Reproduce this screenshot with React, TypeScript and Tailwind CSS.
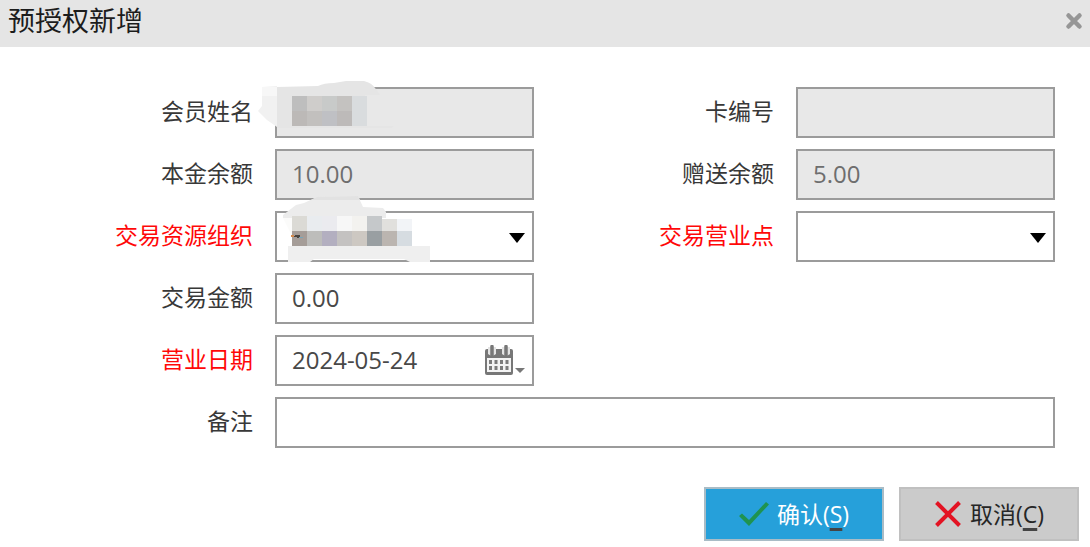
import { useState } from 'react';
import type { ReactNode } from 'react';

const fieldClass =
  'block w-full h-[51px] border-2 border-[#9b9b9b] px-[15px] pb-[3px] text-2xl outline-none rounded-none appearance-none';

interface LabelProps {
  htmlFor: string;
  required?: boolean;
  children: ReactNode;
}

function Label({ htmlFor, required, children }: LabelProps) {
  return (
    <label
      htmlFor={htmlFor}
      className={`pr-[22px] pb-[3px] text-right text-[23px] leading-8 whitespace-nowrap ${required ? 'text-[#ff0808]' : 'text-[#383838]'}`}
    >
      {children}
    </label>
  );
}

function Arrow() {
  return (
    <svg viewBox="0 0 16 10" className="absolute right-[9px] top-[22px] h-[10px] w-4 pointer-events-none" aria-hidden="true">
      <path d="M0 0h16L8 10z" fill="#000" />
    </svg>
  );
}

// Masked member name
function NameMask() {
  const cells = [
    ['#bebebe', '#cfcdcb', '#c8cac9', '#c4c2c0', '#d9dcde'],
    ['#bcb9b7', '#c2c0be', '#bfc0c4', '#bdbab9', '#d9dcde'],
  ];
  return (
    <svg viewBox="0 0 140 54" className="absolute -left-[17px] -top-[9px] h-[54px] w-[140px] pointer-events-none" aria-hidden="true">
      <path d="M4 9L19 8V49L9 42L0 33L4 28z" fill="#f1f1f1" />
      <path d="M4 9h15v9H4z" fill="#f7f7f7" />
      <path d="M19 9L60 8Q66 5 76 5L88 3H106Q114 5 117 10L122 17H107V48H136L134 50H19z" fill="#e5e5e5" />
      <path d="M109 17h30v30h-30z" fill="#e8e8e8" />
      {cells.map((row, y) =>
        row.map((fill, x) => <rect key={`${x}-${y}`} x={34 + x * 15} y={18 + y * 15} width="15" height="15" fill={fill} />)
      )}
    </svg>
  );
}

// Masked organisation name
function OrgMask() {
  const cells = [
    ['#dbdad5', '#e9ecef', '#ebebef', '#f7f7f7', '#f3f2ef', '#c5c8ca', '#e1e0dd', '#f2f4f7'],
    ['#a59d98', '#bdbdbb', '#b3afc0', '#c4c2c1', '#cdc8c2', '#999fa2', '#bbb5b0', '#d6dce1'],
  ];
  return (
    <svg viewBox="0 0 152 70" className="absolute left-[5px] -top-[17px] h-[70px] w-[152px] pointer-events-none" aria-hidden="true">
      <path d="M3 21L16 11L24 9L37 3L78 2L83 13L103 14L106 18V24H3z" fill="#ececec" />
      <path d="M31 6L37 3L78 2L80 6z" fill="#e2e2e2" />
      <path d="M3 24h9v18z" fill="#fbfbfa" />
      <path d="M8 52H150V68H130L124 65H34L30 68H8z" fill="#efefef" />
      {cells.map((row, y) =>
        row.map((fill, x) => (
          <rect
            key={`${x}-${y}`}
            x={12 + x * 15}
            y={y === 0 && x > 5 ? 25 : 22 + y * 15}
            width="15"
            height={y === 0 && x > 5 ? 12 : 15}
            fill={fill}
          />
        ))
      )}
      <path d="M12 42h3v-1h5v3h-3v-1h-5z" fill="#4a4540" />
      <path d="M11 41h3v2h-3z" fill="#d58a4e" />
      <path d="M19 43h4v1h-4z" fill="#78a5b8" />
    </svg>
  );
}

function CalendarIcon() {
  return (
    <svg viewBox="0 0 42 32" className="h-8 w-[42px]" aria-hidden="true">
      <path d="M1 6Q1 4 3 4H27Q29 4 29 6V28Q29 30 27 30H3Q1 30 1 28z" fill="#777" />
      <path d="M3 13h24v14H3z" fill="#f4f4f4" />
      <path d="M4 2h8v7q-4 3-8 0zM18 2h8v7q-4 3-8 0z" fill="#e4e4e4" />
      <path d="M8 1.500v8.500M22 1.500v8.500" stroke="#777" strokeWidth="3.500" strokeLinecap="round" />
      <path d="M12 5h6v5h-6z" fill="#777" />
      <path
        d="M5 15h3v4H5zM10.500 15h3v4h-3zM16 15h3v4h-3zM21.500 15h3v4h-3zM5 21h3v4H5zM10.500 21h3v4h-3zM16 21h3v4h-3zM21.500 21h3v4h-3z"
        fill="#7c7c7c"
      />
      <path d="M31 23h10l-5 5z" fill="#777" />
    </svg>
  );
}

export default function App() {
  const [amount, setAmount] = useState('0.00');
  const [date, setDate] = useState('2024-05-24');
  const [remark, setRemark] = useState('');

  return (
    <div className="w-full bg-white font-['Open_Sans','Noto_Sans_CJK_SC',sans-serif]">
      {/* Title bar */}
      <header className="flex h-[47px] items-center justify-between bg-[#e5e5e5] pl-2 pr-[7px] pb-[6px]">
        <h1 className="text-[27px] leading-10 text-[#1c1c1c]">预授权新增</h1>
        <button type="button" aria-label="关闭" className="cursor-pointer">
          <svg viewBox="0 0 18 18" className="size-[18px]" aria-hidden="true">
            <path d="M3.500 3.500l11 11M14.500 3.500l-11 11" stroke="#969696" strokeWidth="4.500" strokeLinecap="round" />
          </svg>
        </button>
      </header>

      <form onSubmit={(e) => e.preventDefault()}>
        <div className="grid grid-cols-[275px_1fr_262px_1fr] items-center gap-y-[11px] pt-10 pr-[35px]">
          <Label htmlFor="name">会员姓名</Label>
          <div className="relative">
            <input id="name" readOnly className={`${fieldClass} bg-[#e8e8e8]`} />
            <NameMask />
          </div>
          <Label htmlFor="card">卡编号</Label>
          <input id="card" readOnly className={`${fieldClass} bg-[#e8e8e8]`} />

          <Label htmlFor="principal">本金余额</Label>
          <input id="principal" readOnly value="10.00" className={`${fieldClass} bg-[#e8e8e8] text-[#6e6e6e]`} />
          <Label htmlFor="gift">赠送余额</Label>
          <input id="gift" readOnly value="5.00" className={`${fieldClass} bg-[#e8e8e8] text-[#6e6e6e]`} />

          <Label htmlFor="org" required>交易资源组织</Label>
          <div className="relative">
            <select id="org" className={`${fieldClass} bg-white`}>
              <option value=""></option>
            </select>
            <OrgMask />
            <Arrow />
          </div>
          <Label htmlFor="outlet" required>交易营业点</Label>
          <div className="relative">
            <select id="outlet" className={`${fieldClass} bg-white`}>
              <option value=""></option>
            </select>
            <Arrow />
          </div>

          <Label htmlFor="amount">交易金额</Label>
          <input
            id="amount"
            value={amount}
            onChange={(e) => setAmount(e.target.value)}
            className={`${fieldClass} bg-white text-[#484848]`}
          />

          <div className="col-start-1 grid">
            <Label htmlFor="date" required>营业日期</Label>
          </div>
          <div className="relative">
            <input
              id="date"
              value={date}
              onChange={(e) => setDate(e.target.value)}
              className={`${fieldClass} bg-white text-[#484848]`}
            />
            <button type="button" aria-label="选择日期" className="absolute right-2 top-[10px] cursor-pointer">
              <CalendarIcon />
            </button>
          </div>

          <div className="col-start-1 grid">
            <Label htmlFor="remark">备注</Label>
          </div>
          <input
            id="remark"
            value={remark}
            onChange={(e) => setRemark(e.target.value)}
            className={`${fieldClass} col-span-3 bg-white text-[#484848]`}
          />
        </div>

        {/* Actions */}
        <div className="flex justify-end gap-[15px] pt-[39px] pr-[11px] pb-1.5">
          <button
            type="submit"
            className="flex h-[54px] w-[180px] items-center justify-center gap-2 border-2 border-[#a9bcc6] bg-[#26a0da] text-[23px] leading-8 text-white cursor-pointer"
          >
            <svg viewBox="0 0 30 26" className="h-[26px] w-[30px]" aria-hidden="true">
              <path d="M0 15L3 12.500L10 19L27 1L30 3.500L10 25z" fill="#1f9350" />
            </svg>
            <span>
              确认(<span className="underline decoration-[#444] decoration-[3px] underline-offset-[5px] [text-decoration-skip-ink:none]">S</span>)
            </span>
          </button>
          <button
            type="button"
            className="flex h-[54px] w-[180px] items-center justify-center gap-2 border-2 border-[#c0c0c0] bg-[#cbcbcb] text-[23px] leading-8 text-[#262626] cursor-pointer"
          >
            <svg viewBox="0 0 28 28" className="size-7" aria-hidden="true">
              <path d="M2.500 2.500l23 23M25.500 2.500l-23 23" stroke="#e31323" strokeWidth="4" />
            </svg>
            <span>
              取消(<span className="underline decoration-[#444] decoration-[3px] underline-offset-[5px] [text-decoration-skip-ink:none]">C</span>)
            </span>
          </button>
        </div>
      </form>
    </div>
  );
}
